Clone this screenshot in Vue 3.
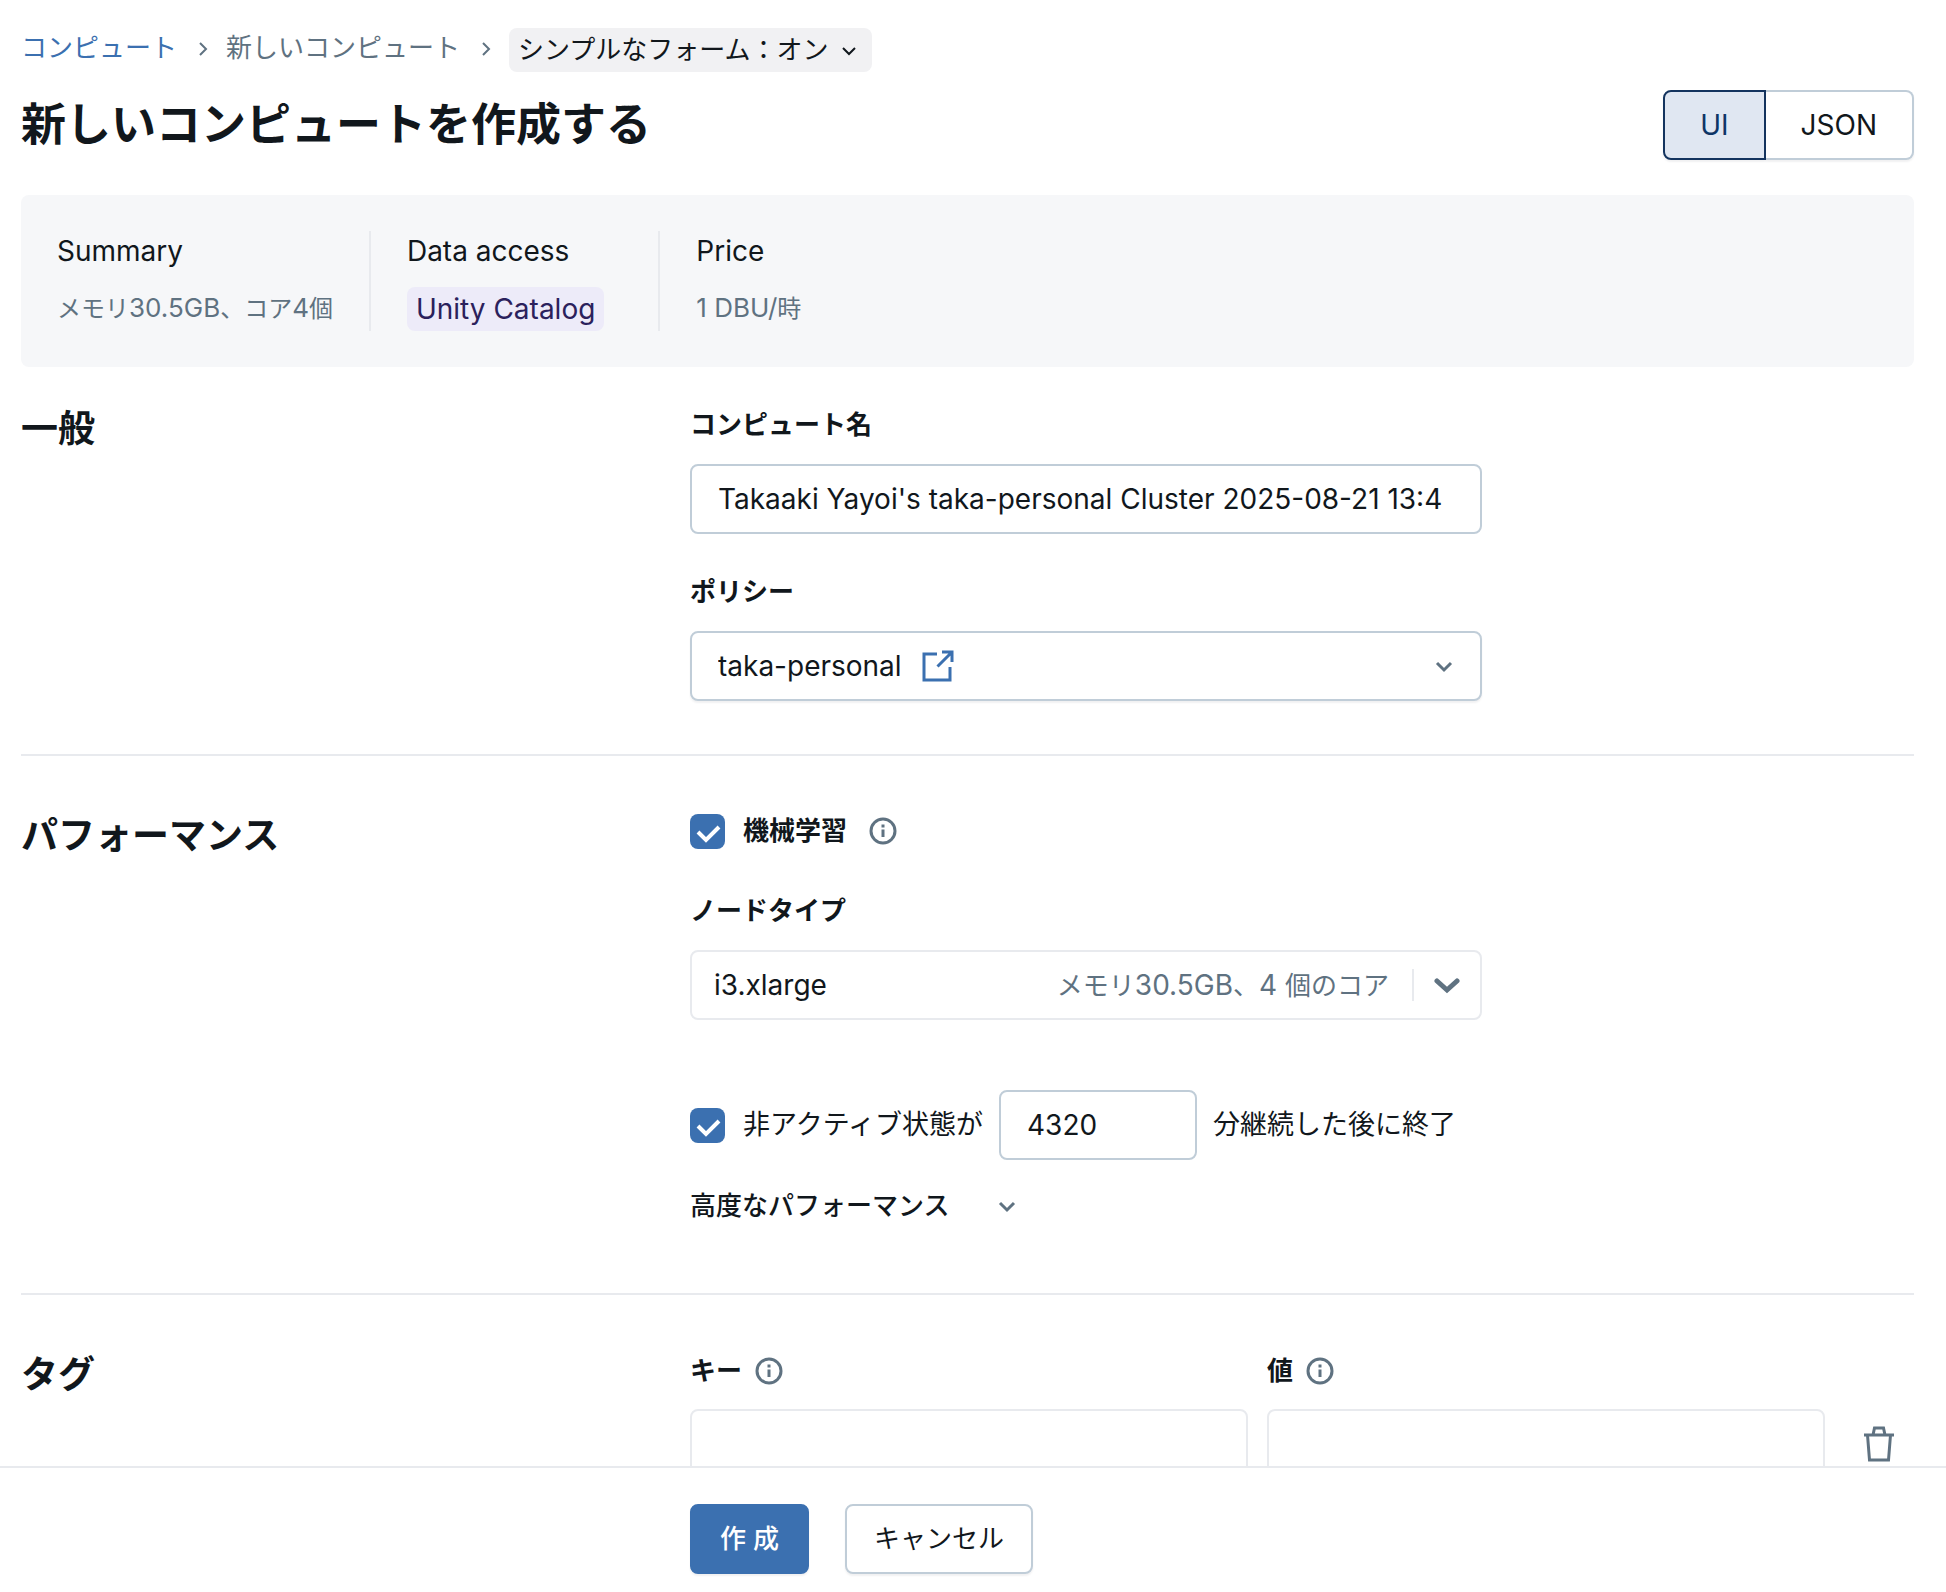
<script setup>
import { ref } from 'vue'

const name = ref("Takaaki Yayoi's taka-personal Cluster 2025-08-21 13:4")
const policy = ref('taka-personal')
const nodeType = ref('i3.xlarge')
const machineLearning = ref(true)
const autoTerminate = ref(true)
const minutes = ref('4320')
const view = ref('UI')
const tagKey = ref('')
const tagValue = ref('')
</script>

<template>
  <div class="page">
    <main class="content">
      <nav class="crumbs" aria-label="breadcrumb">
        <a class="crumb link" href="#">コンピュート</a>
        <svg class="sep" viewBox="0 0 16 20" aria-hidden="true"><path d="M5 4l6 6-6 6" /></svg>
        <span class="crumb">新しいコンピュート</span>
        <svg class="sep" viewBox="0 0 16 20" aria-hidden="true"><path d="M5 4l6 6-6 6" /></svg>
        <button class="pill" type="button">
          <span>シンプルなフォーム：オン</span>
          <svg class="chev-sm" viewBox="0 0 16 16" aria-hidden="true"><path d="M2 6l6 6 6-6" /></svg>
        </button>
      </nav>

      <header class="title-row">
        <h1>新しいコンピュートを作成する</h1>
        <div class="toggle">
          <button type="button" :class="{ active: view === 'UI' }" @click="view = 'UI'">UI</button>
          <button type="button" :class="{ active: view === 'JSON' }" @click="view = 'JSON'">JSON</button>
        </div>
      </header>

      <div class="summary">
        <div class="fact">
          <div class="fact-name">Summary</div>
          <div class="fact-value">メモリ<span class="latin">30.5GB</span>、コア<span class="latin">4</span>個</div>
        </div>
        <div class="fact">
          <div class="fact-name">Data access</div>
          <span class="tag">Unity Catalog</span>
        </div>
        <div class="fact">
          <div class="fact-name">Price</div>
          <div class="fact-value"><span class="latin">1 DBU/</span>時</div>
        </div>
      </div>

      <section class="section">
        <h2>一般</h2>
        <div class="fields">
          <label class="label" for="name">コンピュート名</label>
          <div class="name-box"><input id="name" v-model="name" class="bare" type="text" /></div>
          <label class="label second" for="policy">ポリシー</label>
          <div class="stack">
            <select id="policy" v-model="policy" class="control shadow">
              <option>taka-personal</option>
            </select>
            <div class="over policy-over">
              <a class="ext" href="#" aria-label="open policy">
                <svg viewBox="0 0 32 32"><path d="M15 4H2V30H28V17M20 2H30V12M30 2L15.500 16.500" /></svg>
              </a>
              <svg class="chev" viewBox="0 0 20 20" aria-hidden="true"><path d="M3 7l7 7 7-7" /></svg>
            </div>
          </div>
        </div>
      </section>

      <section class="section">
        <h2>パフォーマンス</h2>
        <div class="fields">
          <div class="check-row">
            <label class="check strong">
              <input v-model="machineLearning" type="checkbox" />
              <span>機械学習</span>
            </label>
            <svg class="info" viewBox="0 0 28 28" aria-hidden="true"><circle cx="14" cy="14" r="12" /><path d="M14 12.500V20M14 7.500V10.500" /></svg>
          </div>
          <label class="label node-label" for="node">ノードタイプ</label>
          <div class="stack">
            <select id="node" v-model="nodeType" class="control pale node">
              <option>i3.xlarge</option>
            </select>
            <div class="over node-over">
              <span>メモリ<span class="latin">30.5GB</span>、<span class="latin">4 </span>個のコア</span>
              <span class="bar"></span>
              <svg class="chev-bold" viewBox="0 0 28 20" aria-hidden="true"><path d="M3 6l10 9 10-9" /></svg>
            </div>
          </div>
          <div class="terminate">
            <label class="check">
              <input v-model="autoTerminate" type="checkbox" />
              <span>非アクティブ状態が</span>
            </label>
            <input v-model="minutes" class="control minutes" type="text" aria-label="分" />
            <span>分継続した後に終了</span>
          </div>
          <button class="advanced" type="button">
            <span>高度なパフォーマンス</span>
            <svg class="chev" viewBox="0 0 20 20" aria-hidden="true"><path d="M3 7l7 7 7-7" /></svg>
          </button>
        </div>
      </section>

      <section class="section">
        <h2>タグ</h2>
        <div class="tags">
          <div class="tag-head">
            <label class="label" for="tag-key">キー</label>
            <svg class="info" viewBox="0 0 28 28" aria-hidden="true"><circle cx="14" cy="14" r="12" /><path d="M14 12.500V20M14 7.500V10.500" /></svg>
          </div>
          <div class="tag-head">
            <label class="label" for="tag-value">値</label>
            <svg class="info" viewBox="0 0 28 28" aria-hidden="true"><circle cx="14" cy="14" r="12" /><path d="M14 12.500V20M14 7.500V10.500" /></svg>
          </div>
          <span></span>
          <input id="tag-key" v-model="tagKey" class="control pale" type="text" />
          <input id="tag-value" v-model="tagValue" class="control pale" type="text" />
          <button class="delete" type="button" aria-label="delete">
            <svg viewBox="0 0 32 36"><path d="M1 9H31M4.500 9L6.500 34H25.500L27.500 9M10 9L11.500 2H20.500L22 9" /></svg>
          </button>
        </div>
      </section>
    </main>

    <footer class="footer">
      <button class="btn primary" type="button">作 成</button>
      <button class="btn" type="button">キャンセル</button>
    </footer>
  </div>
</template>

<style>
body {
  margin: 0;
  background: #fff;
}
</style>

<style scoped>
.page,
.page * {
  box-sizing: border-box;
}
.page {
  height: 100vh;
  display: flex;
  flex-direction: column;
  color: #11171c;
  font-family: Inter, "Noto Sans CJK JP", sans-serif;
  font-size: 26px;
  line-height: 38px;
}
.content {
  flex: 1;
  min-height: 0;
  overflow: hidden;
  padding: 28px 32px 0 21px;
}
button,
input,
select {
  margin: 0;
  color: inherit;
  font-family: inherit;
  font-size: 28px;
  line-height: 38px;
}
button {
  cursor: pointer;
}
svg {
  display: block;
  flex: none;
  fill: none;
  stroke: #5f7281;
  stroke-width: 3;
}
.latin {
  font-size: 28px;
}

.crumbs {
  display: flex;
  align-items: flex-start;
}
.crumb {
  color: #5f7281;
  line-height: 40px;
}
.link {
  color: #3b70b0;
  text-decoration: none;
}
.sep {
  width: 16px;
  height: 20px;
  margin: 11px 15px 0 18px;
}
.pill {
  display: flex;
  align-items: center;
  gap: 13px;
  height: 44px;
  padding: 0 15px 0 9px;
  border: 0;
  border-radius: 8px;
  background: #f1f1f3;
  font-size: 26px;
}
.chev-sm {
  width: 16px;
  height: 16px;
  stroke: #11171c;
}
.sep,
.chev-sm {
  stroke-width: 2;
}

.title-row {
  display: flex;
  align-items: center;
  justify-content: space-between;
  margin-top: 18px;
}
h1,
h2 {
  margin: 0;
  font-weight: 600;
}
h1 {
  font-size: 45px;
  line-height: 58px;
}
h2 {
  font-size: 37px;
  line-height: 46px;
}
.toggle {
  display: flex;
}
.toggle button {
  height: 70px;
  padding: 0 35px;
  border: 2px solid #c0cdd8;
  background: #fff;
  box-shadow: 0 2px 2px rgba(17, 23, 28, 0.06);
}
.toggle button:first-child {
  border-radius: 8px 0 0 8px;
}
.toggle button:last-child {
  border-left: 0;
  border-radius: 0 8px 8px 0;
}
.toggle .active {
  border-color: #14345f;
  background: #e0e7f2;
  color: #0e3566;
}

.summary {
  display: flex;
  margin-top: 35px;
  padding: 36px;
  border-radius: 8px;
  background: #f6f7f9;
}
.fact {
  min-height: 100px;
  padding-right: 36px;
}
.fact + .fact {
  padding-left: 36px;
  border-left: 2px solid #e8eaee;
}
.fact-name {
  font-size: 28px;
  line-height: 40px;
}
.fact-value {
  margin-top: 18px;
  color: #5f7281;
  font-size: 24px;
}
.fact-value .latin {
  font-size: 26px;
}
.tag {
  display: block;
  margin: 16px 18px 0 0;
  padding: 0 9px;
  border-radius: 8px;
  background: #edebf9;
  color: #2b215c;
  font-size: 28px;
  line-height: 44px;
}

.section {
  display: grid;
  grid-template-columns: 669px minmax(0, 1fr);
  padding-top: 39px;
}
.section + .section {
  padding-top: 57px;
  border-top: 2px solid #e8eaee;
}
.fields {
  width: 100%;
  max-width: 792px;
  padding-bottom: 53px;
}
.section + .section .fields {
  padding-bottom: 68px;
}
.label {
  display: block;
  font-weight: 600;
}
.fields .label {
  margin-bottom: 20px;
}
.second {
  margin-top: 39px;
}
.control,
.name-box {
  width: 100%;
  height: 70px;
  padding: 0 26px;
  border: 2px solid #c0cdd8;
  border-radius: 8px;
  background: #fff;
  outline: 0;
  appearance: none;
}
.name-box {
  display: flex;
  align-items: center;
}
.bare {
  width: 100%;
  padding: 0;
  border: 0;
  outline: 0;
  background: transparent;
}
.shadow {
  box-shadow: 0 2px 2px rgba(17, 23, 28, 0.06);
}
.pale {
  border-color: #e8eaee;
}
.stack {
  display: grid;
}
.stack > * {
  grid-area: 1 / 1;
}
.over {
  display: flex;
  align-items: center;
  pointer-events: none;
}
.policy-over {
  justify-content: space-between;
  padding: 0 28px 0 232px;
}
.ext {
  pointer-events: auto;
}
.ext svg {
  width: 32px;
  height: 32px;
  stroke: #3b70b0;
}
.chev {
  width: 20px;
  height: 20px;
}
.node {
  padding: 0 22px;
}
.node-over {
  justify-content: flex-end;
  padding-right: 20px;
  color: #5f7281;
}
.bar {
  width: 2px;
  height: 32px;
  margin: 0 20px 0 23px;
  background: #e8eaee;
}
.chev-bold {
  width: 28px;
  height: 20px;
  stroke-width: 5;
  stroke-linecap: round;
}

.check-row,
.check,
.terminate,
.advanced,
.tag-head {
  display: flex;
  align-items: center;
}
.check-row {
  gap: 22px;
  height: 36px;
}
.check {
  gap: 18px;
}
.strong {
  font-weight: 600;
}
.check input {
  width: 35px;
  height: 35px;
  border: 2px solid #c0cdd8;
  border-radius: 8px;
  appearance: none;
}
.check input:checked {
  border: 0;
  background: #3b70b0 url("data:image/svg+xml,%3Csvg xmlns='http://www.w3.org/2000/svg' viewBox='0 0 35 35'%3E%3Cpath d='M8 18l8 8 13-13' fill='none' stroke='white' stroke-width='4'/%3E%3C/svg%3E") center / 100%;
}
.info {
  width: 28px;
  height: 28px;
}
.node-label {
  margin-top: 43px;
}
.terminate {
  gap: 16px;
  margin-top: 70px;
  font-size: 27px;
}
.minutes {
  width: 198px;
}
.advanced {
  gap: 48px;
  margin-top: 27px;
  padding: 0;
  border: 0;
  background: none;
  font-size: 26px;
  font-weight: 500;
}

.tags {
  display: grid;
  grid-template-columns: 1fr 1fr 70px;
  gap: 19px;
}
.tag-head {
  gap: 13px;
}
.delete {
  display: grid;
  place-items: center;
  height: 70px;
  padding: 0;
  border: 0;
  background: none;
}
.delete svg {
  width: 32px;
  height: 36px;
}

.footer {
  display: flex;
  flex: none;
  gap: 36px;
  padding: 36px 32px 18px 690px;
  border-top: 2px solid #e8eaee;
  background: #fff;
}
.btn {
  height: 70px;
  padding: 0 27px;
  border: 2px solid #c0cdd8;
  border-radius: 8px;
  background: #fff;
  box-shadow: 0 2px 2px rgba(17, 23, 28, 0.06);
  font-size: 26px;
}
.primary {
  padding: 0 28px;
  border-color: #3b70b0;
  background: #3b70b0;
  color: #fff;
  font-weight: 500;
}
</style>
